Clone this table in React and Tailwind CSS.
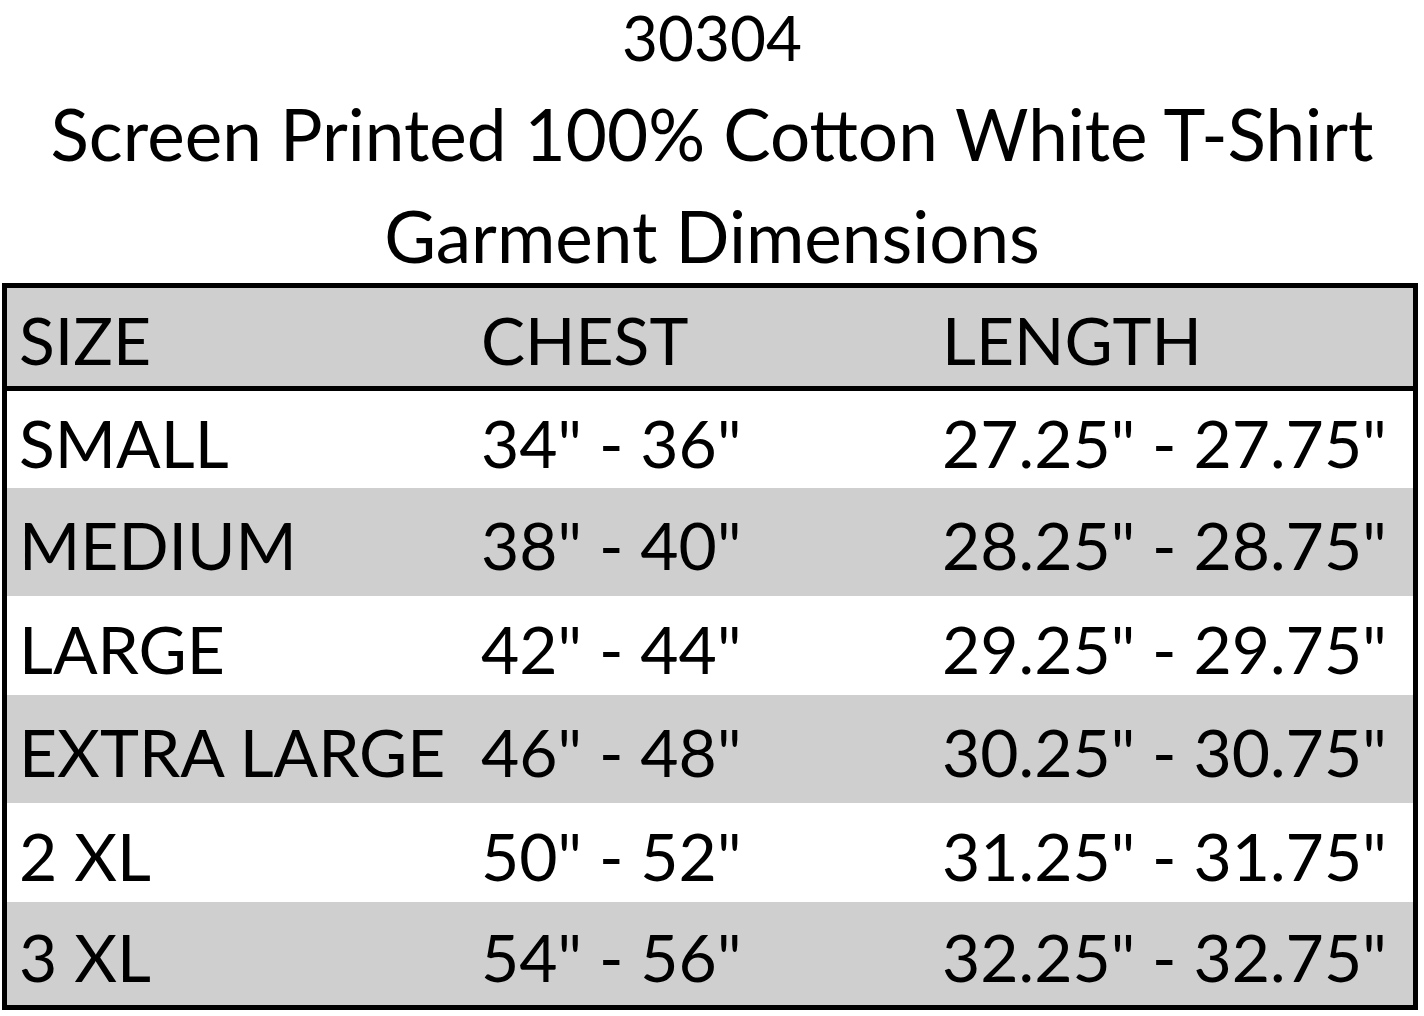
export default function App() {
  const rows = [
    ["SMALL", "34\" - 36\"", "27.25\" - 27.75\"", "bg-white", "h-[97px]"],
    ["MEDIUM", "38\" - 40\"", "28.25\" - 28.75\"", "bg-[#d0cfd0]", "h-[108px]"],
    ["LARGE", "42\" - 44\"", "29.25\" - 29.75\"", "bg-white", "h-[99px]"],
    ["EXTRA LARGE", "46\" - 48\"", "30.25\" - 30.75\"", "bg-[#d0cfd0]", "h-[108px]"],
    ["2 XL", "50\" - 52\"", "31.25\" - 31.75\"", "bg-white", "h-[99px]"],
    ["3 XL", "54\" - 56\"", "32.25\" - 32.75\"", "bg-[#d0cfd0]", "h-[103px]"],
  ];
  return (
    <div className="w-[1424px] h-[1016px] bg-white text-black font-['Lato','Open_Sans',sans-serif] overflow-hidden">
      <div className="h-[283px] flex flex-col items-center">
        <div className="text-[62px] leading-[75px] whitespace-nowrap">30304</div>
        <div className="text-[71px] leading-[117px] whitespace-nowrap">Screen Printed 100% Cotton White T-Shirt</div>
        <div className="text-[71px] leading-[87px] whitespace-nowrap">Garment Dimensions</div>
      </div>
      <div className="ml-[2px] w-[1416px] border-[5px] border-black">
        <div className="h-[103px] bg-[#d0cfd0] flex items-center pt-[6px] text-[66px] leading-none border-b-[5px] border-black">
          <div className="w-[474px] pl-[12px]">SIZE</div>
          <div className="w-[461px]">CHEST</div>
          <div>LENGTH</div>
        </div>
        {rows.map((r) => (
          <div key={r[0]} className={`${r[3]} ${r[4]} flex items-center pt-[6px] text-[66px] leading-none`}>
            <div className="w-[474px] pl-[12px] whitespace-nowrap">{r[0]}</div>
            <div className="w-[461px] whitespace-nowrap">{r[1]}</div>
            <div className="whitespace-nowrap">{r[2]}</div>
          </div>
        ))}
      </div>
    </div>
  );
}
